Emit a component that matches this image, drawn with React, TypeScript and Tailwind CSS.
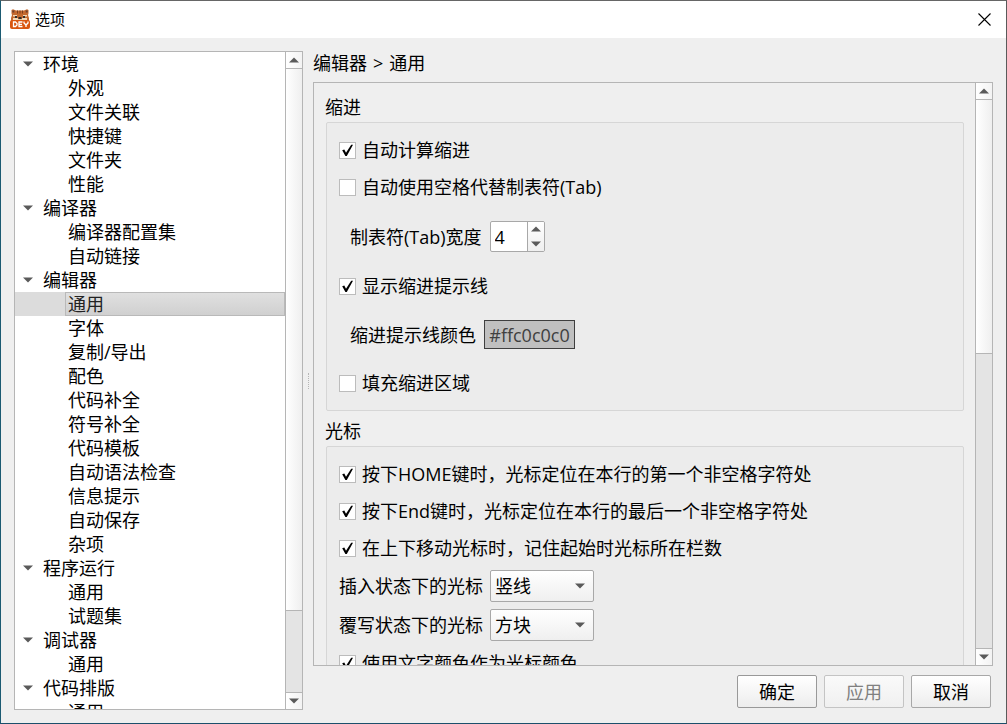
import { useState } from "react";
import type { ReactNode } from "react";

const tree = [
  { title: "环境", items: ["外观", "文件关联", "快捷键", "文件夹", "性能"] },
  { title: "编译器", items: ["编译器配置集", "自动链接"] },
  {
    title: "编辑器",
    items: [
      "通用",
      "字体",
      "复制/导出",
      "配色",
      "代码补全",
      "符号补全",
      "代码模板",
      "自动语法检查",
      "信息提示",
      "自动保存",
      "杂项",
    ],
  },
  { title: "程序运行", items: ["通用", "试题集"] },
  { title: "调试器", items: ["通用"] },
  { title: "代码排版", items: ["通用"] },
];

function Arrow({ up = false }: { up?: boolean }) {
  return (
    <svg width="10" height="6" viewBox="0 0 10 6" className="shrink-0" aria-hidden="true">
      <path d={up ? "M0 5.5 5 0.5 10 5.5Z" : "M0 0.5 5 5.5 10 0.5Z"} fill="#5a5a5a" />
    </svg>
  );
}

function AppIcon() {
  return (
    <svg width="20" height="20" viewBox="0 0 20 20" aria-hidden="true">
      <path d="M1.500 1 3 0.300 6 1.500h8L17 0.300 18.500 1v3.500L18 6l1 3v3H1V9l1-3-0.500-1.500Z" fill="#c4692f" />
      <path d="M2.300 1.500h2v2h-2zM15.700 1.500h2v2h-2z" fill="#6b4030" />
      <path d="M7 1.500h1v3H7zM9.500 1.500h1v3h-1zM12 1.500h1v3h-1z" fill="#7a3d1c" />
      <path d="M3 6h4v1.500H3zM13 6h4v1.500h-4zM3 9h5v3H3zM12 9h5v3h-5z" fill="#f3d9b8" />
      <path d="M5 7h2v2H5zM13 7h2v2h-2zM8.500 8h3v2h-3z" fill="#33302e" />
      <path d="M8 10h4v2H8z" fill="#e8c8a0" />
      <rect x="0" y="11" width="20" height="9" rx="2" fill="#d9560f" />
      <path
        d="M3.500 13h2l1.500 1.500v1.500l-1.500 1.500h-2zM12.500 13H9v4.500h3.500M9 15.300h3M14 12.500v1.500l1.500 1.500h1l1.500-1.500V12.500M16 15.500v2.500"
        fill="none"
        stroke="#fff"
        strokeWidth="1.300"
      />
    </svg>
  );
}

function ScrollBar({ name, thumb }: { name: string; thumb: string }) {
  return (
    <div className="flex w-[17px] shrink-0 flex-col border-l border-[#b5b5b5] bg-[#e4e4e4]">
      <button
        aria-label={`${name}向上滚动`}
        className="flex h-[17px] shrink-0 items-center justify-center border-b border-[#b5b5b5] bg-linear-to-r from-white to-[#f3f3f3]"
      >
        <Arrow up />
      </button>
      <div className="min-h-0 flex-1">
        <div className={`border-b border-[#b5b5b5] bg-linear-to-r from-white to-[#efefef] ${thumb}`} />
      </div>
      <button
        aria-label={`${name}向下滚动`}
        className="flex h-[17px] shrink-0 items-center justify-center border-t border-[#b5b5b5] bg-linear-to-r from-white to-[#f3f3f3]"
      >
        <Arrow />
      </button>
    </div>
  );
}

function Check({ label, checked = false }: { label: string; checked?: boolean }) {
  return (
    <label className="flex h-[30px] shrink-0 items-center gap-1.5 whitespace-nowrap">
      <span className="grid shrink-0 place-items-center">
        <input
          type="checkbox"
          defaultChecked={checked}
          className="peer col-start-1 row-start-1 size-[17px] appearance-none border border-[#bcbcbc] bg-white"
        />
        <svg
          width="13"
          height="13"
          viewBox="0 0 13 13"
          className="pointer-events-none invisible col-start-1 row-start-1 peer-checked:visible"
          aria-hidden="true"
        >
          <path d="M1.200 6.200 3.300 5.600 5 8.800 10.200 0.800 12 0.800 5.800 12 4.400 12Z" fill="#000" />
        </svg>
      </span>
      {label}
    </label>
  );
}

function Group({ title, children }: { title: string; children: ReactNode }) {
  return (
    <fieldset className="flex shrink-0 flex-col">
      <legend className="mb-[3px] h-6 leading-6">{title}</legend>
      <div className="ml-px flex flex-col gap-[7px] rounded-xs border border-[#d6d6d6] bg-[#ececec] p-3">
        {children}
      </div>
    </fieldset>
  );
}

function Combo({ id, label, options }: { id: string; label: string; options: string[] }) {
  return (
    <div className="flex h-8 shrink-0 items-center gap-[7px]">
      <label htmlFor={id}>{label}</label>
      <span className="grid w-[104px] items-center">
        <select
          id={id}
          className="col-start-1 row-start-1 h-8 w-full appearance-none rounded-xs border border-[#a8a8a8] bg-linear-to-b from-white to-[#efefef] px-1"
        >
          {options.map((o) => (
            <option key={o}>{o}</option>
          ))}
        </select>
        <span className="pointer-events-none col-start-1 row-start-1 mr-[9px] justify-self-end">
          <Arrow />
        </span>
      </span>
    </div>
  );
}

function Spin() {
  const [value, setValue] = useState(4);

  return (
    <div className="flex h-[31px] w-[55px] overflow-hidden rounded-xs border border-[#a8a8a8] bg-white">
      <input
        id="tab-width"
        type="text"
        inputMode="numeric"
        value={value}
        onChange={(e) => setValue(Number(e.target.value) || 0)}
        className="w-9 min-w-0 pl-1 outline-none"
      />
      <div className="flex flex-1 flex-col border-l border-[#a8a8a8] bg-linear-to-b from-white to-[#efefef]">
        <button aria-label="增加" onClick={() => setValue(value + 1)} className="flex flex-1 items-center justify-center">
          <Arrow up />
        </button>
        <button aria-label="减少" onClick={() => setValue(value - 1)} className="flex flex-1 items-center justify-center">
          <Arrow />
        </button>
      </div>
    </div>
  );
}

export default function App() {
  const [selected, setSelected] = useState("编辑器/通用");

  return (
    <div className="flex h-screen flex-col overflow-hidden border border-t-[#666] border-r-[#5a5a5a] border-b-[#1b4f6b] border-l-[#1b5a72] bg-[#efefef] font-['Open_Sans','Noto_Sans_CJK_SC',sans-serif] text-lg leading-6 text-black">
      <header className="flex h-[37px] shrink-0 items-center bg-white pr-[13px] pb-px pl-[9px]">
        <AppIcon />
        <h1 className="ml-[5px] flex-1 text-[15px]">选项</h1>
        <button aria-label="关闭" className="p-0.5">
          <svg width="13" height="13" viewBox="0 0 13 13" aria-hidden="true">
            <path d="M0.500 0.500l12 12M12.500 0.500l-12 12" stroke="#000" strokeWidth="1.100" />
          </svg>
        </button>
      </header>

      <div className="flex min-h-0 flex-1 p-[13px]">
        <nav className="flex w-[289px] shrink-0 border border-[#b5b5b5] bg-white">
          <ul className="min-w-0 flex-1 overflow-hidden">
            {tree.map((group) => (
              <li key={group.title}>
                <button className="flex h-6 w-full items-center gap-2.5 pl-2">
                  <Arrow />
                  {group.title}
                </button>
                <ul>
                  {group.items.map((item) => {
                    const key = `${group.title}/${item}`;
                    const active = key === selected;
                    return (
                      <li key={item} className={`pl-[50px] ${active ? "bg-[#dcdcdc]" : ""}`}>
                        <button
                          onClick={() => setSelected(key)}
                          className={`flex h-6 w-full items-center border pl-0.5 ${
                            active
                              ? "border-[#b9b9b9] bg-linear-to-b from-[#e0e0e0] to-[#d0d0d0] text-[#222]"
                              : "border-transparent"
                          }`}
                        >
                          {item}
                        </button>
                      </li>
                    );
                  })}
                </ul>
              </li>
            ))}
          </ul>
          <ScrollBar name="目录" thumb="h-[87%]" />
        </nav>

        <div className="flex w-2.5 shrink-0 items-center justify-center">
          <span className="h-4 border-l border-dotted border-[#b5b5b5]" />
        </div>

        <main className="flex min-w-0 flex-1 flex-col">
          <h2 className="mb-[7px] flex h-6 shrink-0 gap-1.5">
            <span>编辑器</span>
            <span>&gt;</span>
            <span>通用</span>
          </h2>
          <section className="flex min-h-0 flex-1 border border-[#b5b5b5]">
            <div className="flex min-w-0 flex-1 flex-col gap-2 overflow-hidden px-[11px] py-3">
              <Group title="缩进">
                <Check label="自动计算缩进" checked />
                <Check label="自动使用空格代替制表符(Tab)" />
                <div className="flex items-center gap-2 py-3 pl-[11px]">
                  <label htmlFor="tab-width">制表符(Tab)宽度</label>
                  <Spin />
                </div>
                <Check label="显示缩进提示线" checked />
                <div className="flex items-center gap-2 py-3 pl-[11px]">
                  <span id="line-color">缩进提示线颜色</span>
                  <button
                    aria-labelledby="line-color"
                    className="h-[29px] w-[91px] border border-[#3f3f3f] bg-[#c0c0c0] text-[#3f3f3f]"
                  >
                    #ffc0c0c0
                  </button>
                </div>
                <Check label="填充缩进区域" />
              </Group>
              <Group title="光标">
                <Check label="按下HOME键时，光标定位在本行的第一个非空格字符处" checked />
                <Check label="按下End键时，光标定位在本行的最后一个非空格字符处" checked />
                <Check label="在上下移动光标时，记住起始时光标所在栏数" checked />
                <Combo id="insert-caret" label="插入状态下的光标" options={["竖线", "方块"]} />
                <Combo id="overwrite-caret" label="覆写状态下的光标" options={["方块", "竖线"]} />
                <Check label="使用文字颜色作为光标颜色" checked />
              </Group>
            </div>
            <ScrollBar name="内容" thumb="h-[46.4%]" />
          </section>
          <footer className="mt-[9px] mr-0.5 mb-0.5 flex h-[33px] shrink-0 justify-end gap-[7px]">
            <button className="w-20 rounded-xs border border-[#999] bg-linear-to-b from-white to-[#ededed]">确定</button>
            <button disabled className="w-20 rounded-xs border border-[#c4c4c4] bg-linear-to-b from-[#fafafa] to-[#f0f0f0] text-[#808080]">
              应用
            </button>
            <button className="w-20 rounded-xs border border-[#a8a8a8] bg-linear-to-b from-white to-[#ededed]">取消</button>
          </footer>
        </main>
      </div>
    </div>
  );
}
